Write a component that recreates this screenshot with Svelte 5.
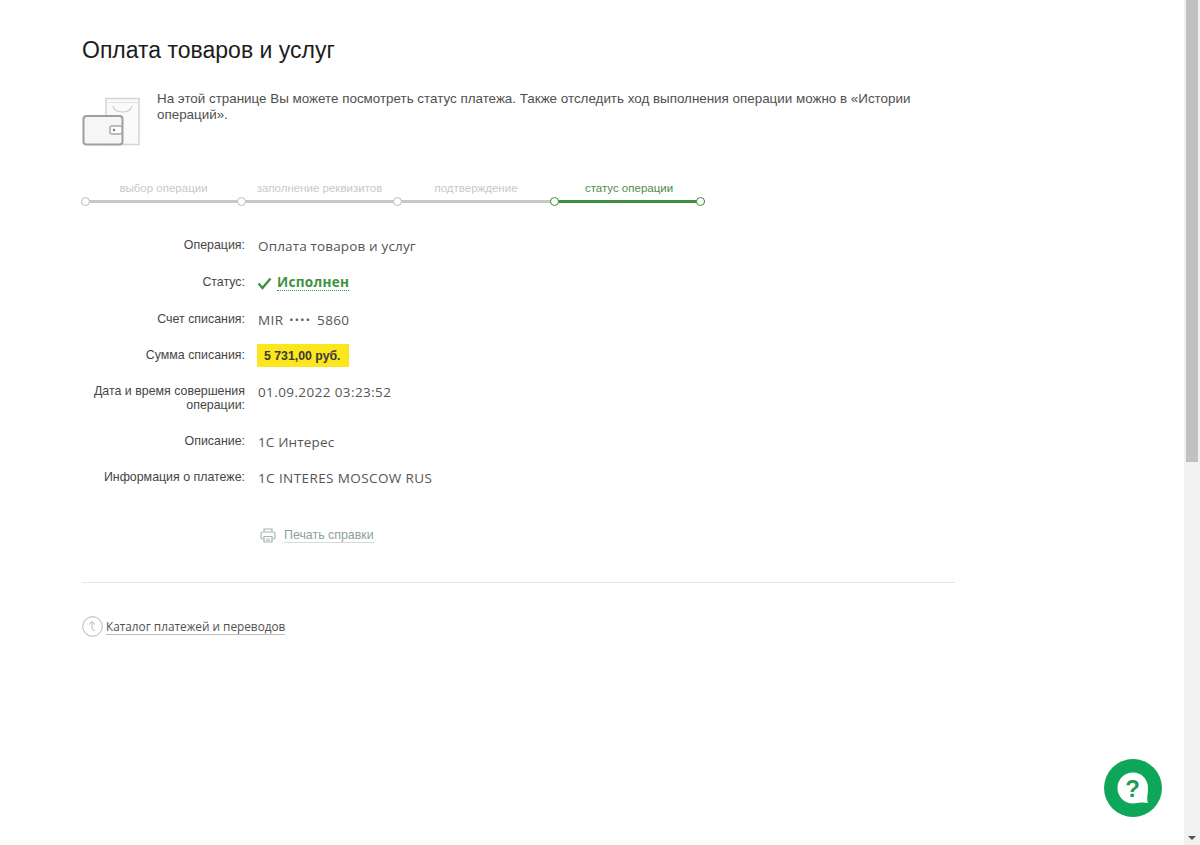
<script lang="ts">
  const steps = [
    { title: 'выбор операции', active: false },
    { title: 'заполнение реквизитов', active: false },
    { title: 'подтверждение', active: false },
    { title: 'статус операции', active: true },
  ];
</script>

<div class="page">
  <main class="content">
    <h1>Оплата товаров и услуг</h1>

    <div class="intro">
      <svg class="wallet" width="58" height="50" viewBox="0 0 58 50" fill="none">
        <path d="M24 1.500h33v46H24z" fill="#fafafa" stroke="#d4d4d4" stroke-width="1.500" />
        <path d="M24 5.500h33" stroke="#e2e2e2" />
        <path d="M31 9c2 8 17 8 19 0" stroke="#d0d0d0" stroke-width="1.200" />
        <rect x="1.500" y="19" width="39" height="28.500" rx="3" fill="#f6f6f6" stroke="#9e9e9e" stroke-width="2" />
        <rect x="28" y="29" width="12" height="8" rx="2" fill="#fff" stroke="#a8a8a8" stroke-width="1.500" />
        <circle cx="32" cy="33" r="1.200" fill="#777" />
      </svg>
      <p>На этой странице Вы можете посмотреть статус платежа. Также отследить ход выполнения операции можно в «Истории операций».</p>
    </div>

    <ol class="steps">
      {#each steps as step}
        <li class="step" class:active={step.active}>
          <span class="step-title">{step.title}</span>
          <span class="step-line"></span>
        </li>
      {/each}
    </ol>

    <dl class="details">
      <div class="row first">
        <dt>Операция:</dt>
        <dd>Оплата товаров и услуг</dd>
      </div>
      <div class="row">
        <dt>Статус:</dt>
        <dd class="status">
          <svg width="15" height="13" viewBox="0 0 15 13" fill="none">
            <path d="M1.500 6.500l4 4.500L13.500 1.500" stroke="#3c9141" stroke-width="2.400" />
          </svg>
          <span class="status-text">Исполнен</span>
        </dd>
      </div>
      <div class="row">
        <dt>Счет списания:</dt>
        <dd class="latin">MIR <span class="dots">••••</span> 5860</dd>
      </div>
      <div class="row sum-row">
        <dt>Сумма списания:</dt>
        <dd><span class="sum">5 731,00 руб.</span></dd>
      </div>
      <div class="row date-row">
        <dt>Дата и время совершения операции:</dt>
        <dd class="latin">01.09.2022 03:23:52</dd>
      </div>
      <div class="row">
        <dt>Описание:</dt>
        <dd>1С Интерес</dd>
      </div>
      <div class="row">
        <dt>Информация о платеже:</dt>
        <dd class="latin">1C INTERES MOSCOW RUS</dd>
      </div>
    </dl>

    <div class="print">
      <svg width="16" height="15" viewBox="0 0 16 15" fill="none" stroke="#a9b5b5" stroke-width="1.200">
        <path d="M4 4V1h8v3" />
        <path d="M4 11H2.500C1.500 11 1 10.500 1 9.500V6c0-1.200.8-2 2-2h10c1.200 0 2 .8 2 2v3.500c0 1-.5 1.500-1.500 1.500H12" />
        <path d="M4 8.500h8V14H4z" />
        <path d="M6 11h4M6 12.500h4" stroke-width=".8" />
      </svg>
      <span class="print-link">Печать справки</span>
    </div>

    <hr />

    <div class="back">
      <svg width="21" height="21" viewBox="0 0 21 21" fill="none" stroke="#b4b4b4">
        <circle cx="10.500" cy="10.500" r="9.800" />
        <path d="M7 8.500l3-2.800 3 2.800M10 5.700v6c0 1.800 1 2.800 3 2.800" />
      </svg>
      <span class="back-link">Каталог платежей и переводов</span>
    </div>
  </main>

  <div class="scrollbar">
    <div class="thumb"></div>
    <div class="arrow"></div>
  </div>

  <button class="chat" aria-label="Помощь">
    <svg width="32" height="32" viewBox="0 0 32 32">
      <path d="M16 .5C7.300.5.500 7.300.5 16S7.300 31.500 16 31.500c3 0 5-.8 8-1 2-.2 4.500-.2 7 .5-1-2-.8-4-.6-7 .4-2.500.6-5 .6-8C31 7.300 24.700.5 16 .5z" fill="#fff" />
      <text x="15.500" y="24.500" text-anchor="middle" class="chat-mark">?</text>
    </svg>
  </button>
</div>

<style>
  :global(body) {
    margin: 0;
    background: #fff;
    overflow: hidden;
  }

  .page {
    position: relative;
    display: flex;
    height: 845px;
    font-family: 'Liberation Sans', Arial, sans-serif;
  }

  .content {
    flex: 1;
    padding: 38px 229px 0 82px;
    min-width: 0;
  }

  h1 {
    margin: 0;
    font-size: 23px;
    line-height: 25px;
    font-weight: 400;
    color: #1c1c1c;
  }

  .intro {
    display: flex;
    gap: 17px;
    margin-top: 28px;
  }

  .wallet {
    flex-shrink: 0;
    margin-top: 6px;
  }

  .intro p {
    margin: 0;
    font-size: 13.4px;
    line-height: 16px;
    color: #505050;
  }

  .steps {
    display: flex;
    list-style: none;
    margin: 35px 0 0 -1px;
    padding: 0;
    width: 624px;
  }

  .step {
    flex: 0 0 156px;
    text-align: center;
    position: relative;
  }

  .step:nth-child(3) {
    flex-basis: 157px;
  }

  .step:last-child {
    flex-basis: 155px;
  }

  .step-title {
    display: block;
    padding-left: 9px;
    font-size: 11.5px;
    line-height: 13px;
    color: #c8c8c8;
    margin-bottom: 5px;
  }

  .step-line {
    display: block;
    height: 3px;
    background: #c8c8c8;
    margin-bottom: 3px;
  }

  .step-line::before {
    content: '';
    position: absolute;
    left: 0;
    bottom: 0;
    width: 9px;
    height: 9px;
    box-sizing: border-box;
    border: 1.500px solid #bdbdbd;
    border-radius: 50%;
    background: #fff;
  }

  .step.active .step-title {
    padding-left: 3px;
    color: #4f8a4f;
  }

  .step.active .step-line {
    background: #3f8f3f;
  }

  .step.active .step-line::before {
    border-color: #3f8f3f;
  }

  .step.active .step-line::after {
    content: '';
    position: absolute;
    right: 0;
    bottom: 0;
    width: 9px;
    height: 9px;
    box-sizing: border-box;
    border: 1.500px solid #3f8f3f;
    border-radius: 50%;
    background: #fff;
  }

  .details {
    margin: 32px 0 0;
  }

  .row {
    display: flex;
    gap: 13px;
    margin-bottom: 20.400px;
  }

  .row.first {
    margin-bottom: 21.400px;
  }

  .row.sum-row {
    margin-bottom: 19.400px;
  }

  .row.date-row {
    margin-bottom: 22.400px;
  }

  dt {
    flex: 0 0 163px;
    text-align: right;
    font-size: 12.4px;
    line-height: 14px;
    color: #454545;
  }

  dd {
    margin: 0;
    font-family: 'Open Sans', 'Noto Sans', sans-serif;
    font-size: 13.5px;
    line-height: 16px;
    letter-spacing: 0.15px;
    color: #555;
  }

  dd.latin {
    letter-spacing: 0.4px;
  }

  .status {
    display: flex;
    align-items: center;
    gap: 5px;
    letter-spacing: 0.3px;
  }

  .status svg {
    margin-left: -1px;
  }

  .status-text {
    font-weight: 700;
    color: #3c9141;
    border-bottom: 1px dotted #3c9141;
    line-height: 15px;
  }

  .dots {
    margin: 0 2px;
    font-size: 11px;
    letter-spacing: 1.300px;
    vertical-align: 1px;
  }

  .sum {
    display: block;
    margin: -4px 0 -3px -1px;
    padding: 5px 9px 4px 7px;
    background: #fce71e;
    font-family: 'Liberation Sans', Arial, sans-serif;
    font-size: 12.3px;
    font-weight: 700;
    line-height: 14px;
    letter-spacing: 0;
    color: #3a3a3a;
  }

  .print {
    display: flex;
    align-items: center;
    gap: 8px;
    margin: 42px 0 0 178px;
  }

  .print-link {
    font-size: 12.4px;
    line-height: 14px;
    color: #8fa0a0;
    border-bottom: 1px solid #d5dcdc;
  }

  hr {
    margin: 39px 0 0;
    border: 0;
    border-top: 1px solid #e6e6e6;
  }

  .back {
    display: flex;
    align-items: center;
    gap: 3px;
    margin-top: 33px;
  }

  .back-link {
    font-family: 'Open Sans', 'Noto Sans', sans-serif;
    font-size: 11.800px;
    line-height: 15px;
    color: #505050;
    border-bottom: 1px solid #bcbcbc;
  }

  .scrollbar {
    flex: 0 0 16px;
    display: flex;
    flex-direction: column;
    justify-content: space-between;
    align-items: center;
    background: #f1f1f1;
  }

  .thumb {
    width: 12px;
    height: 462px;
    background: #c1c1c1;
  }

  .arrow {
    margin-bottom: 5px;
    border-left: 4px solid transparent;
    border-right: 4px solid transparent;
    border-top: 4px solid #505050;
  }

  .chat {
    position: absolute;
    left: 1104px;
    top: 759px;
    display: flex;
    align-items: center;
    justify-content: center;
    width: 58px;
    height: 58px;
    padding: 0;
    border: 0;
    border-radius: 50%;
    background: #0ea658;
  }

  .chat-mark {
    font-family: 'Liberation Sans', Arial, sans-serif;
    font-size: 24px;
    font-weight: 700;
    fill: #1f9a58;
  }
</style>
